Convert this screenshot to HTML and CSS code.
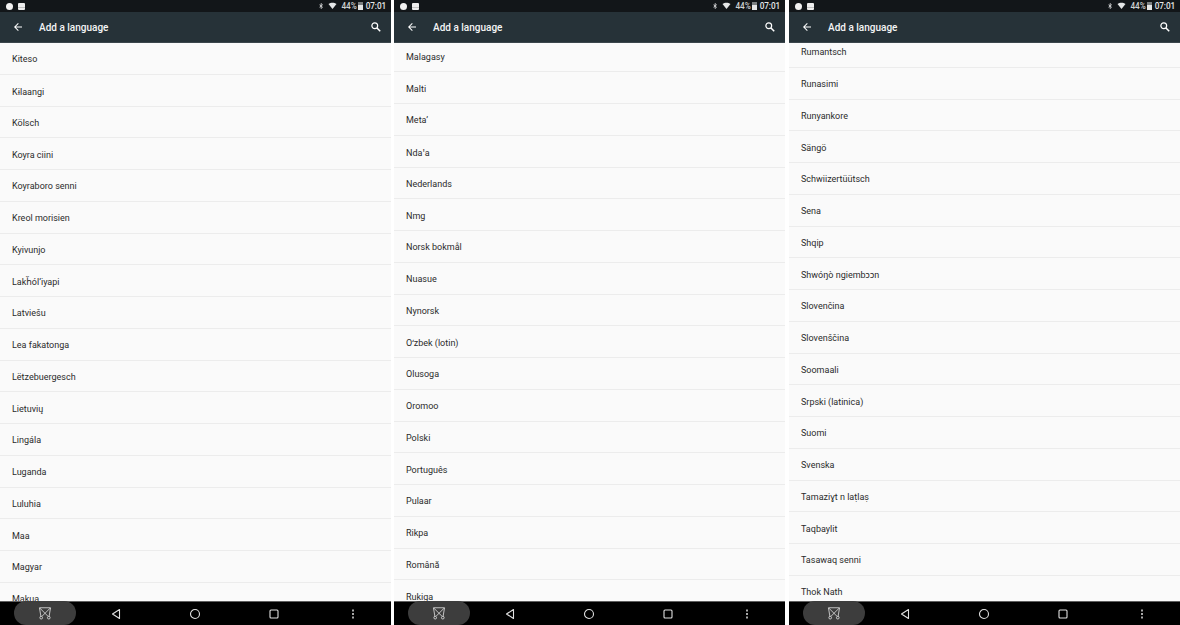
FILE: index.html
```html
<!DOCTYPE html>
<html lang="en">
<head>
<meta charset="utf-8">
<title>Add a language</title>
<link rel="stylesheet" href="styles.css">
</head>
<body>
<svg class="defs" width="0" height="0" aria-hidden="true">
  <symbol id="i-bt" viewBox="0 0 24 24"><path d="M6 7l12 10-6 5V2l6 5L6 17" fill="none" stroke="currentColor" stroke-width="3"/></symbol>
  <symbol id="i-wifi" viewBox="0 0 24 24"><path d="M12 21L0 6c7-5.500 17-5.500 24 0z" fill="currentColor"/></symbol>
  <symbol id="i-back" viewBox="0 0 24 24"><path d="M20 11H7.800l5.600-5.600L12 4l-8 8 8 8 1.400-1.400L7.800 13H20z" fill="currentColor"/></symbol>
  <symbol id="i-search" viewBox="0 0 24 24"><circle cx="9.500" cy="9.500" r="5.800" fill="none" stroke="currentColor" stroke-width="2.400"/><path d="M14 14l6.500 6.500" fill="none" stroke="currentColor" stroke-width="3"/></symbol>
  <symbol id="i-scissor" viewBox="0 0 24 24"><g fill="none" stroke="currentColor" stroke-width="1.400"><path d="M5 18L2.500 3h19L19 18"/><path d="M3 3.500l14 14M21 3.500L7 17.500"/><circle cx="5.500" cy="20" r="2.300"/><circle cx="18.500" cy="20" r="2.300"/></g></symbol>
  <symbol id="i-tri" viewBox="0 0 24 24"><path d="M19 3v18L5 12z" fill="none" stroke="currentColor" stroke-width="2.200" stroke-linejoin="round"/></symbol>
  <symbol id="i-circle" viewBox="0 0 24 24"><circle cx="12" cy="12" r="9" fill="none" stroke="currentColor" stroke-width="2.200"/></symbol>
  <symbol id="i-square" viewBox="0 0 24 24"><rect x="4" y="4" width="16" height="16" rx="2" fill="none" stroke="currentColor" stroke-width="2.200"/></symbol>
  <symbol id="i-more" viewBox="0 0 24 24"><g fill="currentColor"><rect x="10.500" y="3" width="3" height="4"/><rect x="10.500" y="10" width="3" height="4"/><rect x="10.500" y="17" width="3" height="4"/></g></symbol>
</svg>
<main class="shots">

<section class="phone">
  <div class="status">
    <span class="dot"></span><span class="pic"></span><span class="spring"></span>
    <svg class="st-ic"><use href="#i-bt"/></svg><svg class="st-ic wifi"><use href="#i-wifi"/></svg>
    <span class="pct">44%</span><span class="batt"></span><span class="clock">07:01</span>
  </div>
  <header class="bar">
    <svg class="back"><use href="#i-back"/></svg><h1>Add a language</h1><svg class="search"><use href="#i-search"/></svg>
  </header>
  <div class="viewport"><ul class="list off-a">
    <li>Kiteso</li><li>Kɨlaangi</li><li>Kölsch</li><li>Koyra ciini</li><li>Koyraboro senni</li><li>Kreol morisien</li><li>Kyivunjo</li><li>Lakȟólʼiyapi</li><li>Latviešu</li><li>Lea fakatonga</li><li>Lëtzebuergesch</li><li>Lietuvių</li><li>Lingála</li><li>Luganda</li><li>Luluhia</li><li>Maa</li><li>Magyar</li><li>Makua</li>
  </ul></div>
  <nav class="nav">
    <span class="pill"><svg class="nv scis"><use href="#i-scissor"/></svg></span>
    <svg class="nv tri"><use href="#i-tri"/></svg><svg class="nv circ"><use href="#i-circle"/></svg><svg class="nv sq"><use href="#i-square"/></svg><svg class="nv more"><use href="#i-more"/></svg>
  </nav>
</section>

<section class="phone">
  <div class="status">
    <span class="dot"></span><span class="pic"></span><span class="spring"></span>
    <svg class="st-ic"><use href="#i-bt"/></svg><svg class="st-ic wifi"><use href="#i-wifi"/></svg>
    <span class="pct">44%</span><span class="batt"></span><span class="clock">07:01</span>
  </div>
  <header class="bar">
    <svg class="back"><use href="#i-back"/></svg><h1>Add a language</h1><svg class="search"><use href="#i-search"/></svg>
  </header>
  <div class="viewport"><ul class="list off-b">
    <li>Malagasy</li><li>Malti</li><li>Metaʼ</li><li>Ndaꞌa</li><li>Nederlands</li><li>Nmg</li><li>Norsk bokmål</li><li>Nuasue</li><li>Nynorsk</li><li>Oʻzbek (lotin)</li><li>Olusoga</li><li>Oromoo</li><li>Polski</li><li>Português</li><li>Pulaar</li><li>Rikpa</li><li>Română</li><li>Rukiga</li>
  </ul></div>
  <nav class="nav">
    <span class="pill"><svg class="nv scis"><use href="#i-scissor"/></svg></span>
    <svg class="nv tri"><use href="#i-tri"/></svg><svg class="nv circ"><use href="#i-circle"/></svg><svg class="nv sq"><use href="#i-square"/></svg><svg class="nv more"><use href="#i-more"/></svg>
  </nav>
</section>

<section class="phone">
  <div class="status">
    <span class="dot"></span><span class="pic"></span><span class="spring"></span>
    <svg class="st-ic"><use href="#i-bt"/></svg><svg class="st-ic wifi"><use href="#i-wifi"/></svg>
    <span class="pct">44%</span><span class="batt"></span><span class="clock">07:01</span>
  </div>
  <header class="bar">
    <svg class="back"><use href="#i-back"/></svg><h1>Add a language</h1><svg class="search"><use href="#i-search"/></svg>
  </header>
  <div class="viewport"><ul class="list off-c">
    <li>Rumantsch</li><li>Runasimi</li><li>Runyankore</li><li>Sängö</li><li>Schwiizertüütsch</li><li>Sena</li><li>Shqip</li><li>Shwóŋò ngiembɔɔn</li><li>Slovenčina</li><li>Slovenščina</li><li>Soomaali</li><li>Srpski (latinica)</li><li>Suomi</li><li>Svenska</li><li>Tamaziɣt n laṭlaṣ</li><li>Taqbaylit</li><li>Tasawaq senni</li><li>Thok Nath</li>
  </ul></div>
  <nav class="nav">
    <span class="pill"><svg class="nv scis"><use href="#i-scissor"/></svg></span>
    <svg class="nv tri"><use href="#i-tri"/></svg><svg class="nv circ"><use href="#i-circle"/></svg><svg class="nv sq"><use href="#i-square"/></svg><svg class="nv more"><use href="#i-more"/></svg>
  </nav>
</section>

</main>
</body>
</html>
```
FILE: styles.css
```css
* { box-sizing: border-box; }
html, body { margin: 0; height: 100%; background: #fff; overflow: hidden; }
body { font-family: Roboto, "Noto Sans", sans-serif; }
.defs { display: block; width: 0; height: 0; }
.shots { display: grid; grid-template-columns: 394px 395px 391px; height: 625px; }
.phone { display: flex; flex-direction: column; width: 391px; height: 625px; min-width: 0; background: #fafafa; }

.status { height: 12px; flex: none; background: #121619; color: #e4e6e7; display: flex; align-items: center; padding: 0 5px 0 6px; font-size: 8.200px; font-weight: 500; }
.dot { width: 7px; height: 7px; border-radius: 50%; background: #f2f2f2; }
.pic { width: 7px; height: 7px; margin-left: 5px; border-radius: 1px; background: linear-gradient(#eee 55%, #9a9a9a 55%, #eee 75%); }
.spring { flex: 1; }
.st-ic { width: 6px; height: 8px; }
.wifi { width: 9px; margin-left: 4px; }
.pct { margin-left: 4px; color: #cfd2d4; }
.batt { width: 5px; height: 8px; margin-left: 1px; background: linear-gradient(#7b7f81 40%, #e4e6e7 40%); }
.clock { margin-left: 3px; font-size: 8.200px; letter-spacing: -0.100px; }

.bar { height: 31px; flex: none; background: #263238; color: #fff; display: flex; align-items: center; padding: 0 9px 0 12px; border-bottom: 1px solid #3b464c; }
.bar h1 { margin: 0 0 0 15px; flex: 1; font-size: 10px; font-weight: 500; color: #f4f5f5; }
.back { width: 12px; height: 12px; }
.search { width: 12px; height: 12px; margin-top: -1px; }

.viewport { flex: 1; min-height: 0; overflow: hidden; }
.list { list-style: none; margin: 0; padding: 0; }
.off-a { margin-top: 0; }
.off-b { margin-top: -2.500px; }
.off-c { margin-top: -7px; }
.list li { height: 31.750px; padding: 2px 0 0 12px; display: flex; align-items: center; font-size: 9px; color: #2b2b2b; border-bottom: 1px solid #ececec; }

.nav { height: 24px; flex: none; background: #000; border-top: 1px solid #5f5f5f; display: flex; align-items: center; color: #e0e0e0; }
.pill { width: 62px; height: 24px; margin-left: 14px; margin-top: -1px; border-radius: 12px; background: #3d3d3d; display: flex; align-items: center; justify-content: center; flex: none; }
.nv { width: 12px; height: 12px; flex: none; }
.scis { width: 14px; height: 14px; }
.tri { margin-left: 34.400px; }
.circ { margin-left: 67px; }
.sq { margin-left: 67px; }
.more { margin-left: 67px; }
```
